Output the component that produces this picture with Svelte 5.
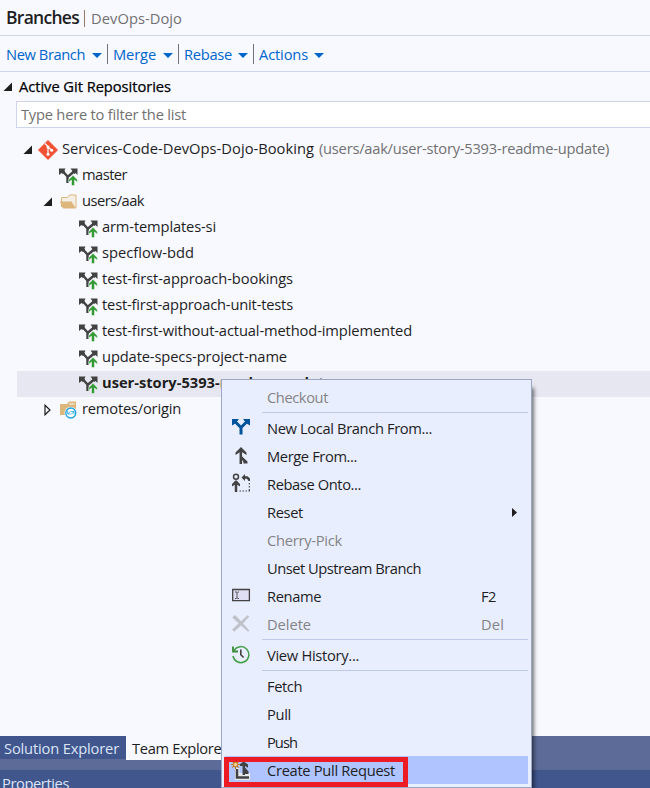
<script>
  const actions = [
    { label: 'New Branch', w: 79, box: 108 },
    { label: 'Merge', w: 43, box: 71 },
    { label: 'Rebase', w: 48, box: 75 },
    { label: 'Actions', w: 49, box: 76 }
  ];

  const rows = [
    { icon: 'branch', label: 'master', w: 45, level: 1 },
    { icon: 'folder', label: 'users/aak', w: 62, level: 1, arrow: 'open' },
    { icon: 'branch', label: 'arm-templates-si', w: 114, level: 2 },
    { icon: 'branch', label: 'specflow-bdd', w: 92, level: 2 },
    { icon: 'branch', label: 'test-first-approach-bookings', w: 191, level: 2 },
    { icon: 'branch', label: 'test-first-approach-unit-tests', w: 191, level: 2 },
    { icon: 'branch', label: 'test-first-without-actual-method-implemented', w: 310, level: 2 },
    { icon: 'branch', label: 'update-specs-project-name', w: 185, level: 2 },
    { icon: 'branch', label: 'user-story-5393-readme-update', w: 231, level: 2, selected: true },
    { icon: 'remote', label: 'remotes/origin', w: 99, level: 1, arrow: 'closed' }
  ];

  const menu = [
    { label: 'Checkout', w: 61, disabled: true },
    null,
    { label: 'New Local Branch From...', w: 165, icon: 'new' },
    { label: 'Merge From...', w: 90, icon: 'merge' },
    { label: 'Rebase Onto...', w: 94, icon: 'rebase' },
    { label: 'Reset', w: 36, sub: true },
    { label: 'Cherry-Pick', w: 75, disabled: true },
    { label: 'Unset Upstream Branch', w: 154 },
    { label: 'Rename', w: 54, icon: 'rename', key: 'F2', kw: 15 },
    { label: 'Delete', w: 44, icon: 'delete', key: 'Del', kw: 23, disabled: true },
    null,
    { label: 'View History...', w: 92, icon: 'history' },
    null,
    { label: 'Fetch', w: 35 },
    { label: 'Pull', w: 24 },
    { label: 'Push', w: 30 },
    { label: 'Create Pull Request', w: 128, icon: 'pull', hot: true }
  ];

  // Spreads a label's letters so that it takes the given width.
  function fit(node, width) {
    const natural = node.getBoundingClientRect().width;
    node.style.letterSpacing = (width - natural) / node.textContent.length + 'px';
  }
</script>

{#snippet icon(name)}
  {#if name === 'branch'}
    <svg class="ic" width="20" height="20" viewBox="0 -1 20 20">
      <path d="M4 4.500 8.500 9.500V16M15 4.500 8.500 10" fill="none" stroke="#424242" stroke-width="2.400" />
      <path d="M0 1.500h6.500L5.500 3.500 6 5 4 7 2.500 6 0 8zM18.500 1.500h-7l1.500 2L13.500 5l2 2 1-1 2 2z" fill="#424242" />
      <path d="M14 8.300 18.300 12.800v2.500l-2.800-2.300v5.500h-3V13l-2.800 2.300v-2.500z" fill="#339933" stroke="#f8f9ff" stroke-width=".5" />
    </svg>
  {:else if name === 'folder'}
    <svg class="ic" width="20" height="20" viewBox="0 0 20 20">
      <path d="M2.500 15V5.500h6l2-2.500h6.500v13" fill="#f3eee6" stroke="#dcb67a" />
      <path d="M.8 9.500h11.700l4.500 7H4z" fill="#dcb67a" />
    </svg>
  {:else if name === 'remote'}
    <svg class="ic" width="20" height="20" viewBox="0 0 20 20">
      <path d="M1 4h7l2-2.500h7v13.500H1z" fill="#dcb67a" />
      <path d="M10 4h5.500" stroke="#f8f9ff" />
      <circle cx="11.800" cy="13" r="6.300" fill="#f8f9ff" />
      <circle cx="11.800" cy="13" r="5" fill="#fff" stroke="#1ba1e2" stroke-width="1.300" />
      <path d="M8.700 11v3h3M9 13.800l2.300-2.500M15 14.500v-3h-3M14.700 11.800l-2.500 2.500" fill="none" stroke="#1ba1e2" stroke-width=".8" />
    </svg>
  {:else if name === 'new'}
    <svg class="ic" width="20" height="20" viewBox="0 0 20 20">
      <path d="M4 4.500 10 10.500V17.500M16 4.500 10 10.500" fill="none" stroke="#00539c" stroke-width="3" />
      <path d="M1 2h7L6 4.500 3.500 7 1 8.500zM19 2h-7l2 2.500 2.500 2.500 2.500 1.500z" fill="#00539c" />
    </svg>
  {:else if name === 'merge'}
    <svg class="ic" width="20" height="20" viewBox="0 -1 20 20">
      <path d="M9.800 18V4M9.800 9v2l5 5" fill="none" stroke="#424242" stroke-width="2.500" />
      <path d="M10 1 15.500 6.500V9L10 5.500 4.500 9V6.500z" fill="#424242" />
      <path d="M12 12 16.500 15.500v2h-4z" fill="#424242" />
    </svg>
  {:else if name === 'rebase'}
    <svg class="ic" width="20" height="20" viewBox="0 0 20 20">
      <circle cx="5" cy="3.800" r="2.500" fill="none" stroke="#424242" stroke-width="1.500" />
      <path d="M5 8v11" stroke="#424242" stroke-width="2.500" />
      <path d="M5 7 9 11v2.500L5 11 1 13.500V11z" fill="#424242" />
      <path d="M10.500 4.500 14 1v2.300h2.500L19 5.500V8h-1.500L16 5.800h-2V8z" fill="#424242" />
      <path d="M8.500 18H19M18.300 10v8" fill="none" stroke="#424242" stroke-width="1.100" stroke-dasharray="1.500 1.500" />
    </svg>
  {:else if name === 'rename'}
    <svg class="ic" width="20" height="20" viewBox="0 0 20 20">
      <path d="M1.700 4.500h16.700v11.200H1.700z" fill="#e0def2" stroke="#424242" stroke-width="1.300" />
      <path d="M4 7h1.300l.7.700.7-.7H8M6 7.700v5M4 13.500h1.300l.7-.8.7.8H8" fill="none" stroke="#424242" stroke-width=".9" />
    </svg>
  {:else if name === 'delete'}
    <svg class="ic" width="20" height="20" viewBox="0 -.5 20 20">
      <path d="M1.500 4 4 1.800 10 8 16.500 2l1.500 1L11.800 10 18 17l-.8 1L10 11.800 3 18 1.500 16 8 9.800z" fill="#bfc1c9" stroke="#bfc1c9" stroke-width=".5" />
    </svg>
  {:else if name === 'history'}
    <svg class="ic" width="20" height="20" viewBox="0 0 20 20">
      <path d="M3 6.500A8 8 0 1 1 2 12" fill="none" stroke="#43a047" stroke-width="1.500" />
      <path d="M2 2.500v5h5" fill="none" stroke="#388a34" stroke-width="1.800" />
      <path d="M9.800 5.500v5.200l2.800 2.800" fill="none" stroke="#424242" stroke-width="1.600" />
    </svg>
  {:else if name === 'pull'}
    <svg class="ic" width="20" height="20" viewBox="0 0 20 20">
      <path d="M4 8h4.500v5H19v7H4z" fill="#e6e8ee" />
      <path d="M6 9v8.500h12M12.800 15V4M12.800 8l3.500 4" fill="none" stroke="#424242" stroke-width="2.500" />
      <path d="M9 6V4L12.800 1.500 17 4.500v3.200L14 6zM12.500 9.500l5 2V14h-5z" fill="#424242" />
      <path d="M4.500 0v9M0 4.500h9M1.300 1.300l6.400 6.400M7.700 1.300 1.300 7.700" stroke="#c27d1a" stroke-width="1.200" />
      <circle cx="4.500" cy="4.500" r="2.100" fill="#f3d49b" stroke="#c27d1a" />
    </svg>
  {/if}
{/snippet}

{#snippet openArrow()}
  <svg class="tri" width="10" height="10" viewBox="0 0 10 10"><path d="M9 .5V9H.5z" fill="#1e1e1e" /></svg>
{/snippet}

<div class="window">
  <header>
    <b use:fit={73}>Branches</b><i></i><span use:fit={91}>DevOps-Dojo</span>
  </header>

  <nav>
    {#each actions as a}
      <div class="action" style="width:{a.box}px">
        <span use:fit={a.w}>{a.label}</span>
        <svg width="10" height="5" viewBox="0 0 10 5"><path d="M0 0h10L5 5z" fill="#0066cc" /></svg>
      </div>
    {/each}
  </nav>

  <div class="section">{@render openArrow()}<span use:fit={152}>Active Git Repositories</span></div>
  <div class="filter"><span use:fit={165}>Type here to filter the list</span></div>

  <div class="tree">
    <div class="row level0">
      {@render openArrow()}
      <svg class="git" width="20" height="20" viewBox="0 0 20 20">
        <path d="M10 .5 19.500 10 10 19.500.5 10z" fill="#f05133" stroke="#f05133" stroke-linejoin="round" />
        <path d="M7 3.500l3 3v8M10 7l4 3.500" fill="none" stroke="#fff" stroke-width="1.200" />
        <circle cx="10" cy="7" r="1.500" fill="#fff" /><circle cx="10" cy="14.200" r="1.500" fill="#fff" /><circle cx="13.700" cy="10.300" r="1.500" fill="#fff" />
      </svg>
      <span use:fit={252}>Services-Code-DevOps-Dojo-Booking</span>
      <span class="current" use:fit={290}>(users/aak/user-story-5393-readme-update)</span>
    </div>
    {#each rows as r}
      <div class="row level{r.level}" class:selected={r.selected}>
        <div class="twist">
          {#if r.arrow === 'open'}{@render openArrow()}{/if}
          {#if r.arrow === 'closed'}
            <svg class="closed" width="8" height="12" viewBox="0 0 8 12"><path d="M1 1.200 6 6 1 10.800z" fill="none" stroke="#1e1e1e" stroke-width="1.200" /></svg>
          {/if}
        </div>
        {@render icon(r.icon)}
        <span use:fit={r.w}>{r.label}</span>
      </div>
    {/each}
  </div>

  <footer>
    <div class="tabs">
      <div class="tab"><span use:fit={115}>Solution Explorer</span></div>
      <div class="tab active"><span use:fit={95}>Team Explorer</span></div>
    </div>
    <div class="properties"><span use:fit={67}>Properties</span></div>
  </footer>

  <div class="menu">
    {#each menu as m}
      {#if m}
        <div class="item" class:disabled={m.disabled} class:hot={m.hot}>
          <div class="slot">{#if m.icon}{@render icon(m.icon)}{/if}</div>
          <span class="label"><span use:fit={m.w}>{m.label}</span></span>
          {#if m.key}<span class="key"><span use:fit={m.kw}>{m.key}</span></span>{/if}
          {#if m.sub}<svg class="sub" width="5" height="9" viewBox="0 0 5 9"><path d="M0 0 5 4.500 0 9z" fill="#1e1e1e" /></svg>{/if}
        </div>
      {:else}
        <hr />
      {/if}
    {/each}
    <div class="marker"></div>
  </div>
</div>

<style>
  :global(body) { margin: 0; overflow: hidden; }
  .window {
    position: relative;
    width: 650px;
    height: 788px;
    overflow: hidden;
    display: flex;
    flex-direction: column;
    background: #f8f9ff;
    color: #1e1e1e;
    font: 14.7px/20px "Open Sans", "Noto Sans", sans-serif;
    white-space: nowrap;
  }
  span, b { flex: none; }
  svg { display: block; flex: none; }
  header {
    box-sizing: border-box;
    height: 36px;
    padding: 1px 0 0 6px;
    display: flex;
    align-items: center;
    border-bottom: 1px solid #ccd5eb;
    color: #717171;
  }
  header b { margin-top: -2px; font-size: 17.500px; font-weight: 600; color: #1e1e1e; }
  header i { width: 1px; height: 17px; margin: 0 6px 0 5px; background: #947b68; }
  nav {
    box-sizing: border-box;
    height: 36px;
    display: flex;
    align-items: center;
    border-bottom: 1px solid #ccd5eb;
    color: #0066cc;
  }
  .action {
    box-sizing: border-box;
    height: 20px;
    padding: 0 5px;
    display: flex;
    align-items: center;
    justify-content: space-between;
    border-right: 1px solid #717171;
  }
  .action:first-child { padding-left: 6px; }
  .action:last-child { border-color: transparent; }
  .action svg { margin-top: 4px; }
  .section {
    height: 29px;
    padding-left: 3px;
    display: flex;
    align-items: center;
    gap: 6px;
    color: #000;
    font-weight: 500;
    -webkit-text-stroke: .25px;
  }
  .section span, .filter span { margin-top: -2px; }
  .filter {
    box-sizing: border-box;
    height: 27px;
    margin: 0 0 9px 16px;
    padding-left: 4px;
    display: flex;
    align-items: center;
    border: 1px solid #ccd5eb;
    border-right: 0;
    background: #fff;
    color: #717171;
  }
  .row { height: 26px; margin-left: 17px; display: flex; align-items: center; }
  .row > span { margin-top: -4px; }
  .selected { background: #e6e7f0; font-weight: 700; }
  .level0 { padding-left: 6px; }
  .git { margin: 0 4px 0 5px; }
  .current { margin-left: 5px; color: #717171; }
  .twist { width: 16px; display: flex; }
  .twist .closed { margin-left: 1px; }
  .level1 { padding-left: 26px; }
  .level2 { padding-left: 46px; }
  .row .ic { margin-right: 3px; overflow: visible; }
  footer { margin-top: auto; height: 52px; background: #5d6b99; }
  .tabs { height: 34px; display: flex; align-items: flex-start; }
  .tab { box-sizing: border-box; width: 126px; height: 23px; padding: 2px 0 0 4px; background: #40568d; color: #dce4f7; }
  .tab.active { height: 24px; padding-left: 6px; background: #f8f9ff; color: #1e1e1e; }
  .properties { height: 18px; padding-left: 2px; overflow: hidden; background: #40568d; color: #dce4f7; line-height: 26px; }
  .menu {
    position: absolute;
    left: 221px;
    top: 379px;
    box-sizing: border-box;
    width: 311px;
    height: 409px;
    padding: 3px;
    border: 1px solid #9ba7c9;
    background: #e9eefe;
    box-shadow: 4px 7px 4px -2px rgba(0, 0, 0, .55);
  }
  .item { height: 28px; display: flex; align-items: center; }
  .slot { width: 42px; padding-left: 6px; box-sizing: border-box; margin-top: -2px; }
  .label { width: 214px; }
  .label, .key { margin-top: -1px; }
  .disabled { color: #848484; }
  .hot { background: #b0c5ff; }
  .hot .slot { margin-top: 0; }
  .sub { margin-left: 31px; }
  hr { height: 1px; margin: 1px 0 1px 37px; border: 0; background: #bec9e8; }
  .marker { position: absolute; box-sizing: border-box; left: 2px; top: 377px; width: 184px; height: 30px; border: 5px solid #ed1c24; }
</style>
